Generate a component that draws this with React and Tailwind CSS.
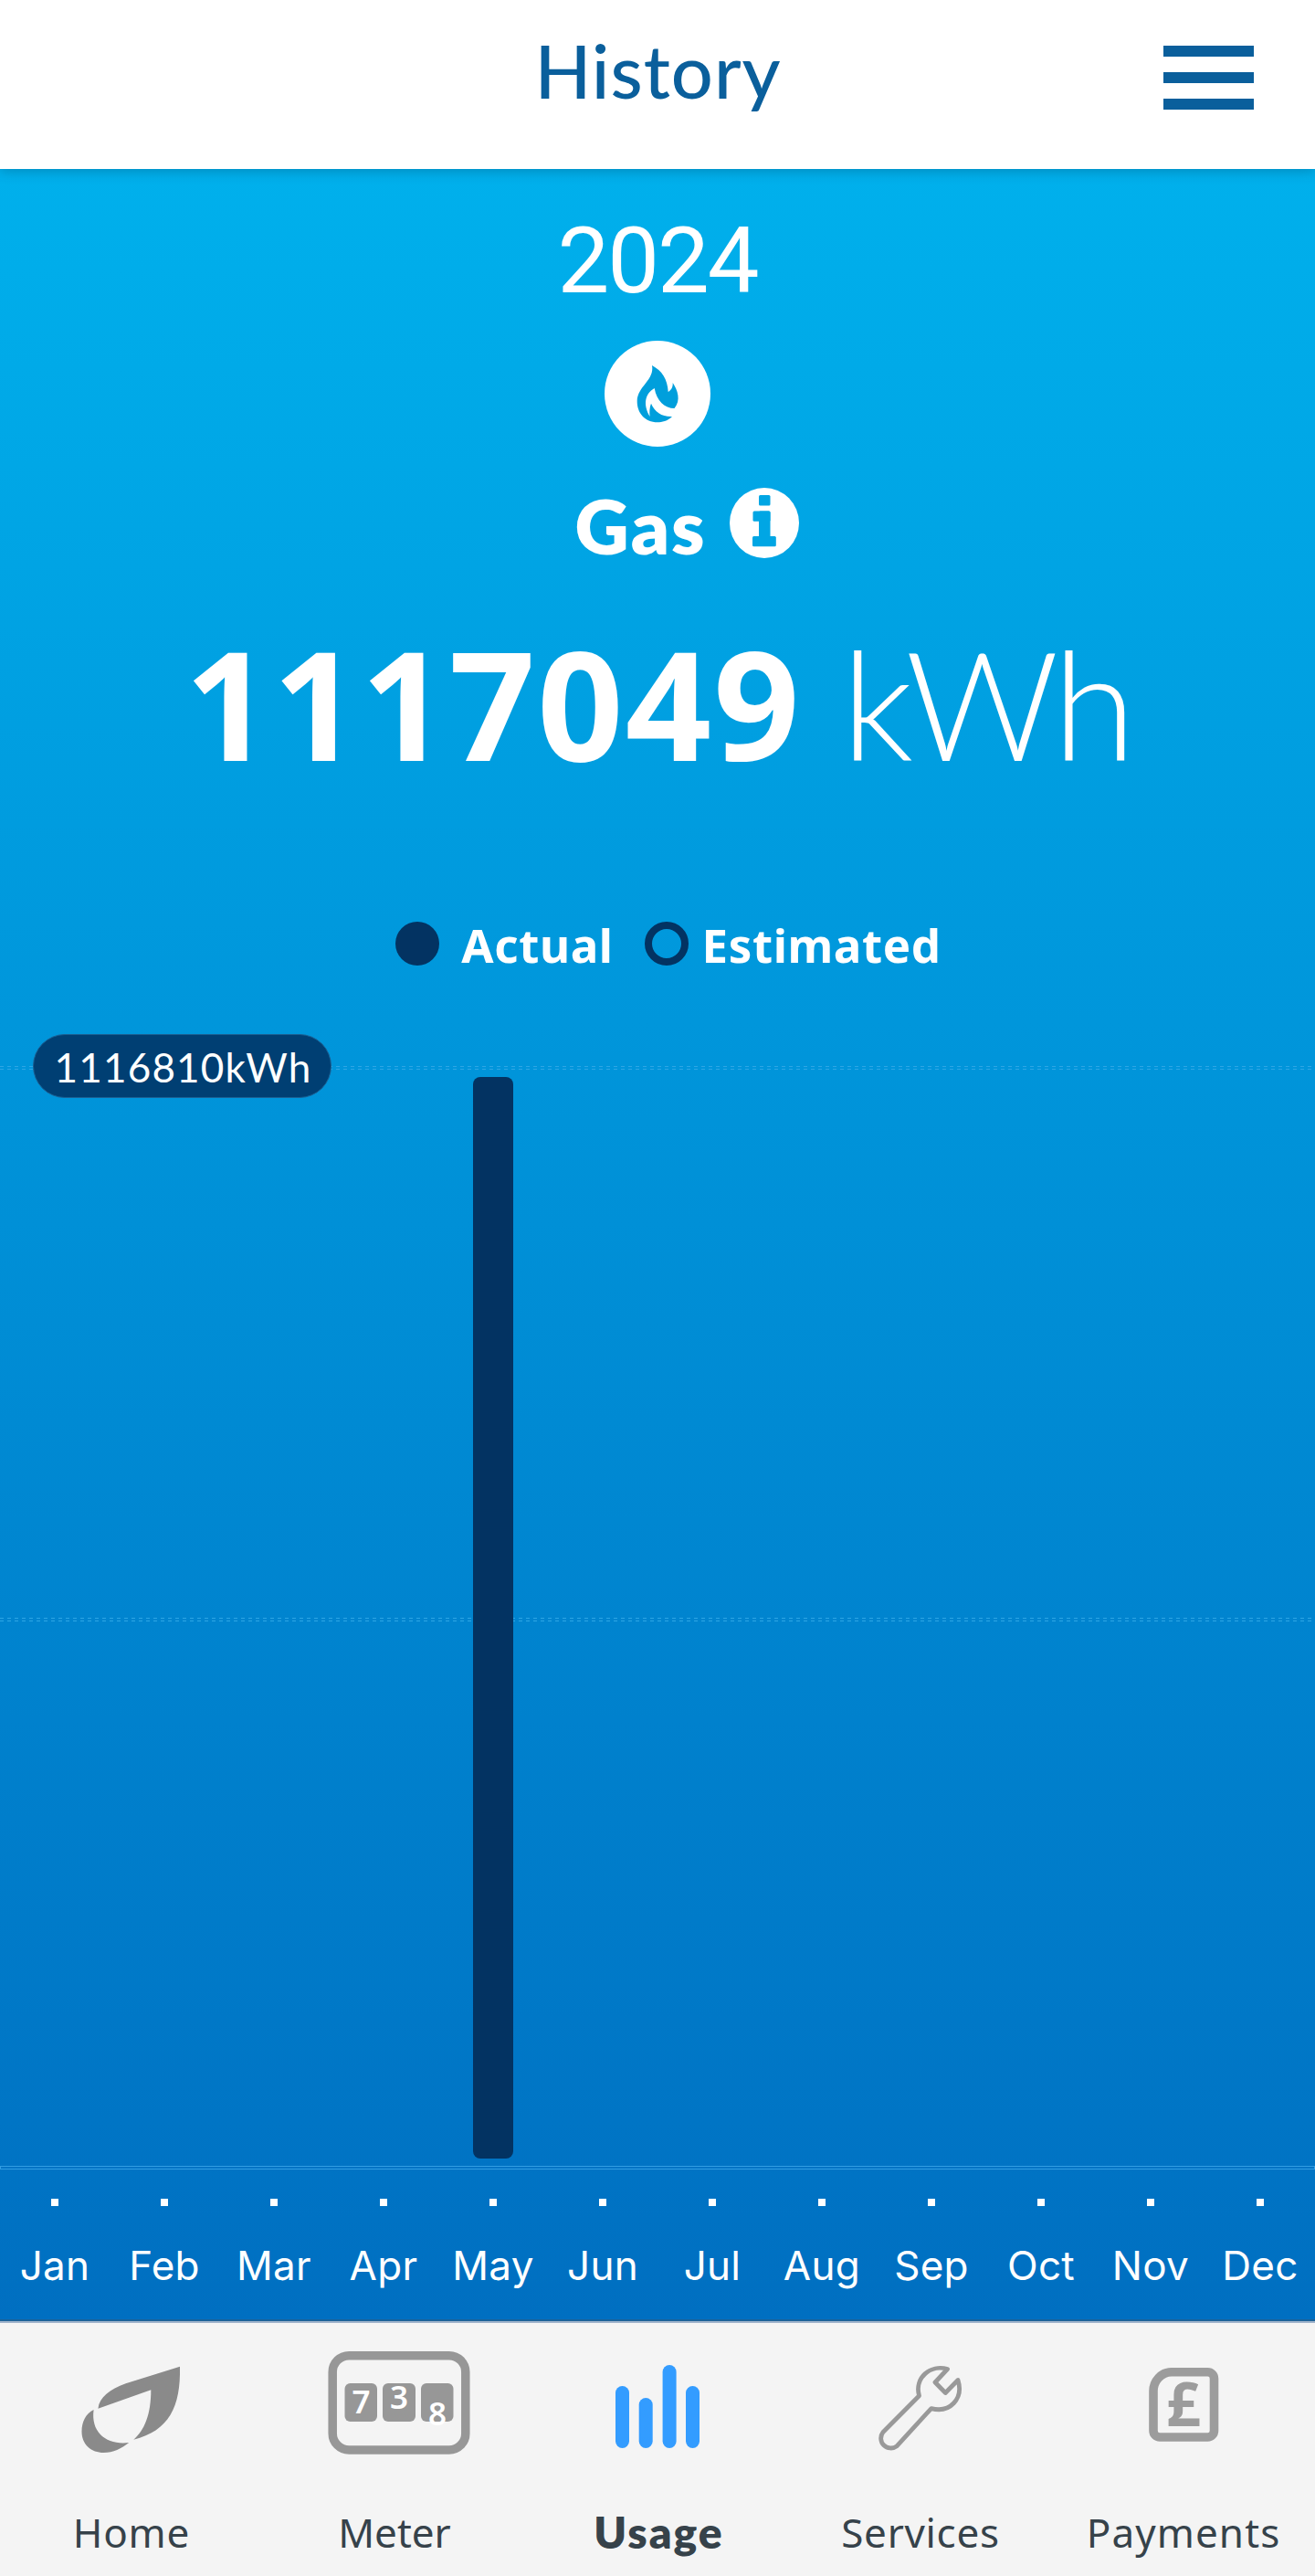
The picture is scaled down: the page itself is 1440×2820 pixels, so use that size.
const MONTHS = ["Jan", "Feb", "Mar", "Apr", "May", "Jun", "Jul", "Aug", "Sep", "Oct", "Nov", "Dec"];

function FlameBadge() {
  return (
    <svg className="h-[116px] w-[116px]" viewBox="0 0 116 116">
      <circle cx="58" cy="58" r="58" fill="#fff" />
      <path
        fill="#009fdc"
        d="M52 27C63 33 69 42 69.7 56C73 54 75 51 74.7 46C80 54 84 65 76.5 74C66 74 57 66 54.7 52C44 58 42 70 49.6 83C49 78 49.3 73 51 68.7C55 78 63 83.5 74 83C69 88 63 89.3 58 89.3C44 89.3 35.5 79 35.7 66C36 50 55 43 52 27Z"
      />
    </svg>
  );
}

function InfoBadge() {
  return (
    <svg className="h-[77px] w-[76px]" viewBox="0 0 76 77">
      <ellipse cx="38" cy="38.5" rx="38" ry="38.5" fill="#fff" />
      <g fill="#00a6e4">
        <rect x="32" y="8" width="12.5" height="11.5" rx="1.5" />
        <rect x="25.5" y="25.5" width="19" height="11.2" rx="1.5" />
        <rect x="32" y="25.5" width="12.5" height="36" rx="1.5" />
        <rect x="25" y="53" width="25.8" height="11.3" rx="1.5" />
      </g>
    </svg>
  );
}

function Leaf() {
  return (
    <svg className="h-[199px] w-[288px]" viewBox="0 0 288 199" fill="#8a8a8a">
      <path d="M197 47.7L137.7 66.3C120 73 109 81 107.4 93.7L165.3 73.3C165.5 100 158 118 146.3 127.7C185 118 198 92 197 47.7Z" />
      <path d="M102.6 95C94 99 89.5 108 89.5 119C89.5 133 100 142 113.6 142C124 142 133 137.5 141.2 131C118 134 99 121 102.6 95Z" />
    </svg>
  );
}

function MeterIcon() {
  return (
    <svg className="h-[199px] w-[288px]" viewBox="0 0 288 199">
      <rect x="76.2" y="35.7" width="145.6" height="103.3" rx="18" fill="none" stroke="#979797" strokeWidth="9.5" />
      <g fill="#979797">
        <rect x="89.5" y="66" width="35.5" height="42" rx="6" />
        <rect x="131" y="66" width="36" height="42" rx="6" />
        <rect x="173" y="66" width="35.5" height="42" rx="6" />
      </g>
      <g className="font-['Noto_Sans'] text-[35px] font-semibold" fill="#fff" textAnchor="middle">
        <text x="107.5" y="99">7</text>
        <text x="149" y="94">3</text>
        <text x="191" y="111.7">8</text>
      </g>
    </svg>
  );
}

function UsageIcon() {
  return (
    <svg className="h-[199px] w-[288px]" viewBox="0 0 288 199" fill="#339cff">
      <rect x="98" y="69" width="15" height="68" rx="7.5" />
      <rect x="123.7" y="82" width="15" height="55" rx="7.5" />
      <rect x="149.6" y="46" width="15" height="91" rx="7.5" />
      <rect x="175" y="69" width="15" height="68" rx="7.5" />
    </svg>
  );
}

function Wrench() {
  return (
    <svg className="h-[199px] w-[288px]" viewBox="0 0 288 199">
      <path
        d="M173.5 50.5C155 45 137 60 142.5 79.7L103 119.5A10.8 10.8 0 0 0 118 134.8L155.8 93.6C176 99 191.5 83 185 62.5L171.3 76.5L160 65Z"
        fill="none"
        stroke="#999"
        strokeWidth="4.8"
        strokeLinejoin="round"
      />
    </svg>
  );
}

function PoundIcon() {
  return (
    <svg className="h-[199px] w-[288px]" viewBox="0 0 288 199">
      <path
        d="M131 53.8H170.5A7 7 0 0 1 177.5 60.8V118A7 7 0 0 1 170.5 125H118A7 7 0 0 1 111 118V75A20 21 0 0 1 131 53.8Z"
        fill="none"
        stroke="#9c9c9c"
        strokeWidth="9.6"
      />
      <text x="144" y="112.7" textAnchor="middle" fill="#9c9c9c" className="font-['Noto_Sans'] text-[66px] font-bold">
        £
      </text>
    </svg>
  );
}

const TABS = [
  { label: "Home", Icon: Leaf, text: "tracking-[0.8px]" },
  { label: "Meter", Icon: MeterIcon, text: "tracking-[0px]" },
  { label: "Usage", Icon: UsageIcon, active: true },
  { label: "Services", Icon: Wrench, text: "tracking-[0.7px]" },
  { label: "Payments", Icon: PoundIcon, text: "tracking-[1.1px]" },
];

function DashedLine() {
  return (
    <div className="flex h-1 flex-col justify-between">
      <div className="h-px bg-[repeating-linear-gradient(90deg,#2ea6e5_0_4px,transparent_4px_8px)]" />
      <div className="h-px bg-[repeating-linear-gradient(90deg,#2ea6e5_0_4px,transparent_4px_8px)]" />
    </div>
  );
}

export default function App() {
  return (
    <div className="flex h-[2820px] w-[1440px] flex-col overflow-hidden bg-white font-['Noto_Sans',sans-serif]">
      <header className="relative z-10 flex h-[185px] shrink-0 justify-center bg-white pt-[29px] shadow-[0_3px_12px_rgba(0,60,90,0.3)]">
        <h1 className="ml-px h-24 font-['Lato'] text-[81px] leading-[96px] font-medium tracking-[1px] text-[#0a5f9c]">History</h1>
        <div className="absolute top-[50px] right-[67px] flex h-[70px] w-[99px] flex-col justify-between">
          <div className="h-3 bg-[#0a5f9c]" />
          <div className="h-3 bg-[#0a5f9c]" />
          <div className="h-3 bg-[#0a5f9c]" />
        </div>
      </header>

      <main className="flex h-[2356px] shrink-0 flex-col items-center border-b-2 border-[#1c6299] bg-linear-to-b from-[#00b0ec] to-[#006fc1] text-white">
        <div className="mt-[41px] h-[116px] font-['Roboto'] text-[101px] leading-[120px] tracking-[-2px]">2024</div>
        <div className="mt-[31px] h-[116px]">
          <FlameBadge />
        </div>
        <div className="mt-[37px] ml-[64px] flex h-[98px] gap-[25px]">
          <div className="font-['Lato'] text-[82px] leading-[98px] font-extrabold tracking-[2px]">Gas</div>
          <div className="mt-2">
            <InfoBadge />
          </div>
        </div>
        <div className="mt-[45px] flex h-[200px] gap-[44px] whitespace-nowrap">
          <span className="text-[165px] leading-[200px] font-bold tracking-[2.1px]">1117049</span>
          <span className="font-['Lato'] text-[165px] leading-[200px] font-light tracking-[-6px]">kWh</span>
        </div>
        <div className="mt-[133px] ml-[24px] flex h-16 items-center text-[51px] leading-[64px] font-bold tracking-[0.6px]">
          <div className="-mt-0.5 h-12 w-12 rounded-full bg-[#033362]" />
          <span className="ml-[24px]">Actual</span>
          <div className="-mt-0.5 ml-[34px] h-12 w-12 rounded-full border-8 border-[#033362]" />
          <span className="ml-[15px]">Estimated</span>
        </div>

        <div className="relative mt-[101px] flex h-[1208px] w-full flex-col">
          <DashedLine />
          <div className="h-[600px]" />
          <DashedLine />
          <div className="h-[596px]" />
          <div className="h-1 border border-[#329de2]" />
          <div className="absolute top-[12px] left-[518px] h-[1184px] w-11 rounded-lg bg-[#033362]" />
          <div className="absolute top-[-35px] left-9 flex h-[70px] w-[327px] items-center justify-center rounded-full border border-[#1b5f92] bg-[#003f73] pt-0.5 pl-0.5 font-['Lato'] text-[44px] leading-[70px] tracking-[1.2px]">
            1116810kWh
          </div>
        </div>

        <div className="mt-8 grid w-full grid-cols-12 justify-items-center">
          {MONTHS.map((month) => (
            <div key={month} className="flex flex-col items-center gap-[37px]">
              <div className="h-2 w-2 bg-white" />
              <div className="h-14 font-['Inter'] text-[44px] leading-[56px] tracking-[0.3px]">{month}</div>
            </div>
          ))}
        </div>
      </main>

      <nav className="grid h-[279px] shrink-0 grid-cols-5 border-t-2 border-[#9fb3cb] bg-[#f4f4f4] text-[#36424a]">
        {TABS.map(({ label, Icon, active, text }) => (
          <div key={label} className="flex flex-col items-center">
            <Icon />
            <div className={active ? "pl-[3px] font-['Lato'] text-[48px] leading-[60px] font-extrabold tracking-[2px]" : `text-[44px] leading-[60px] ${text}`}>
              {label}
            </div>
          </div>
        ))}
      </nav>
    </div>
  );
}
